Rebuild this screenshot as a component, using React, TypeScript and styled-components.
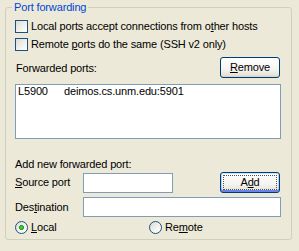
import React from "react";
import styled, { createGlobalStyle } from "styled-components";

const GlobalStyle = createGlobalStyle`
  html, body { margin: 0; padding: 0; background: #ECE9D8; }
  body {
    width: 299px; height: 251px; overflow: hidden;
    font-family: "Liberation Sans", Arial, sans-serif;
    font-size: 11px; letter-spacing: -0.15px; color: #000;
  }
  * { box-sizing: border-box; }
`;

const Page = styled.div`
  width: 299px;
  height: 251px;
`;

const Group = styled.fieldset`
  margin: 0 0 0 5px;
  width: 287px;
  height: 240px;
  border: 1px solid #D0D0BF;
  border-radius: 3px;
  padding: 6px 10px 5px 9px;
  min-inline-size: 0;
`;

const Legend = styled.legend`
  padding: 0 2px;
  margin-left: -3px;
  color: #0046D5;
  line-height: 14px;
`;

const Body = styled.div`
  display: flex;
  flex-direction: column;
`;

const U = styled.span`
  text-decoration: underline;
`;

const CheckRow = styled.label`
  display: flex;
  align-items: center;
  gap: 3px;
  height: 13px;
  line-height: 13px;
  & + & { margin-top: 5px; }
`;

const CheckBox = styled.span`
  width: 13px;
  height: 13px;
  flex: none;
  border: 1px solid #1C5180;
  background: linear-gradient(135deg, #DCDCD7 0%, #F2F2EE 60%, #FFFFFF 100%);
`;

const HeaderRow = styled.div`
  margin-top: 6px;
  height: 21px;
  display: flex;
  align-items: center;
  justify-content: space-between;
  padding-left: 1px;
`;

const Button = styled.button<{ $focused?: boolean }>`
  width: 60px;
  height: 21px;
  margin: 0 1px 0 0;
  padding: 0;
  font: inherit;
  letter-spacing: inherit;
  color: #000;
  border: 1px solid #003C74;
  border-radius: 3px;
  background: linear-gradient(#FFFFFF 0%, #F4F4F0 60%, #E6E3D9 90%, #D6D0C5 100%);
  box-shadow: ${(p) =>
    p.$focused
      ? "inset 0 1px 0 #CEE7FF, inset 0 -2px 0 #6982EE, inset 1px 0 0 #B9D1FA, inset -1px 0 0 #B9D1FA"
      : "none"};
  outline: ${(p) => (p.$focused ? "1px dotted #555" : "none")};
  outline-offset: -4px;
  line-height: 19px;
  text-align: center;
`;

const List = styled.div`
  margin-top: 6px;
  height: 55px;
  border: 1px solid #7F9DB9;
  background: #fff;
  padding: 0 2px;
`;

const ListItem = styled.div`
  display: grid;
  grid-template-columns: 46px 1fr;
  line-height: 13px;
`;

const SectionLabel = styled.div`
  margin-top: 19px;
  line-height: 13px;
`;

const FieldRow = styled.div<{ $h: number; $top: number }>`
  display: flex;
  align-items: center;
  height: ${(p) => p.$h}px;
  margin-top: ${(p) => p.$top}px;
`;

const FieldLabel = styled.label`
  width: 68px;
  flex: none;
  line-height: 13px;
`;

const Input = styled.input<{ $w?: number }>`
  height: 20px;
  border: 1px solid #7F9DB9;
  background: #fff;
  padding: 0 2px;
  font: inherit;
  ${(p) => (p.$w ? `width: ${p.$w}px; flex: none;` : "flex: 1; min-width: 0;")}
`;

const Spacer = styled.div`
  flex: 1;
`;

const RadioRow = styled.div`
  margin-top: 4px;
  display: grid;
  grid-template-columns: 134px 1fr;
  height: 13px;
`;

const RadioLabel = styled.label`
  display: flex;
  align-items: center;
  gap: 3px;
  line-height: 13px;
`;

const Radio = styled.span<{ $checked?: boolean }>`
  width: 13px;
  height: 13px;
  flex: none;
  border-radius: 50%;
  border: 1px solid #1C5180;
  background: ${(p) =>
    p.$checked
      ? "radial-gradient(circle at 50% 50%, #55D551 0, #21A121 2.2px, transparent 2.8px), linear-gradient(135deg, #DCDCD7 0%, #F4F4F0 60%, #FFFFFF 100%)"
      : "linear-gradient(135deg, #DCDCD7 0%, #F4F4F0 60%, #FFFFFF 100%)"};
`;

export default function App() {
  return (
    <Page>
      <GlobalStyle />
      <Group>
        <Legend>Port forwarding</Legend>
        <Body>
          <CheckRow>
            <CheckBox />
            <span>
              Local ports accept connections from o<U>t</U>her hosts
            </span>
          </CheckRow>
          <CheckRow>
            <CheckBox />
            <span>
              Remote <U>p</U>orts do the same (SSH v2 only)
            </span>
          </CheckRow>
          <HeaderRow>
            <span>Forwarded ports:</span>
            <Button>
              <U>R</U>emove
            </Button>
          </HeaderRow>
          <List>
            <ListItem>
              <span>L5900</span>
              <span>deimos.cs.unm.edu:5901</span>
            </ListItem>
          </List>
          <SectionLabel>Add new forwarded port:</SectionLabel>
          <FieldRow $h={21} $top={1}>
            <FieldLabel>
              <U>S</U>ource port
            </FieldLabel>
            <Input $w={90} />
            <Spacer />
            <Button $focused>
              A<U>d</U>d
            </Button>
          </FieldRow>
          <FieldRow $h={20} $top={4}>
            <FieldLabel>
              Des<U>t</U>ination
            </FieldLabel>
            <Input />
          </FieldRow>
          <RadioRow>
            <RadioLabel>
              <Radio $checked />
              <span>
                <U>L</U>ocal
              </span>
            </RadioLabel>
            <RadioLabel>
              <Radio />
              <span>
                Re<U>m</U>ote
              </span>
            </RadioLabel>
          </RadioRow>
        </Body>
      </Group>
    </Page>
  );
}
